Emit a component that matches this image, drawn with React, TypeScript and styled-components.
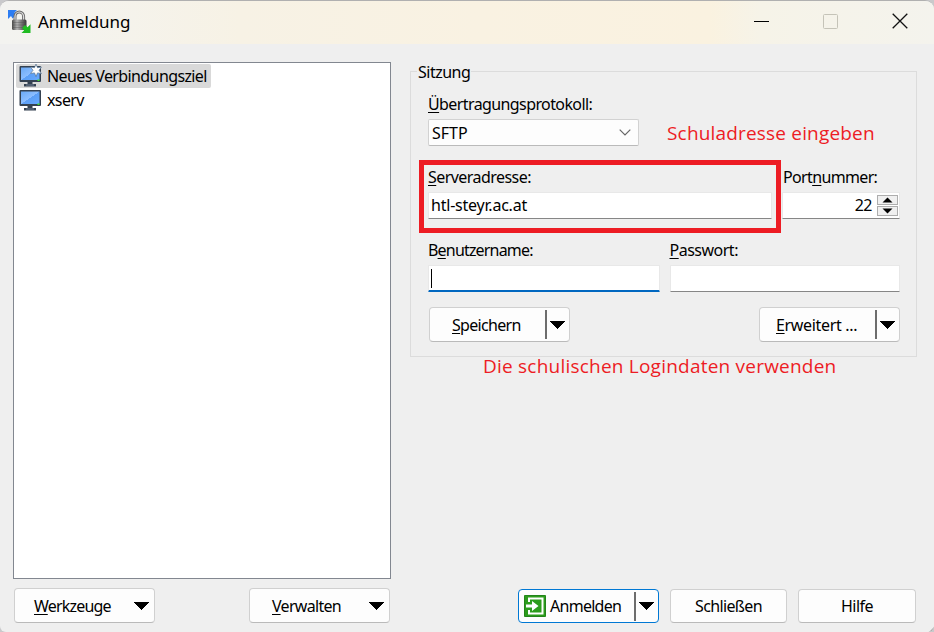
import React from "react";
import styled, { createGlobalStyle } from "styled-components";

const GlobalStyle = createGlobalStyle`
  * { box-sizing: border-box; }
  body { margin: 0; background: #c9c9cb; overflow: hidden; }
`;

const Window = styled.div`
  position: relative;
  width: 934px;
  height: 632px;
  overflow: hidden;
  display: flex;
  flex-direction: column;
  background: #efefef;
  border-top: 1px solid #b0b0b0;
  border-radius: 9px 9px 6px 6px;
  font-family: "Noto Sans", sans-serif;
  font-size: 16px;
  line-height: 22px;
  color: #000;
`;

const TitleBar = styled.header`
  display: flex;
  align-items: center;
  height: 43px;
  flex: none;
  padding: 0 0 1px 8px;
  background: linear-gradient(90deg, #f3f3f0 0, #f4f3ee 80px, #f7f2e5 240px, #f9f2e2 480px, #faf2e0 710px, #f6f3e8 760px, #f4f3ed 934px);
`;

const Text = styled.span<{ $ls?: number; $size?: number }>`
  white-space: pre;
  font-size: ${(p) => p.$size ?? 16}px;
  letter-spacing: ${(p) => p.$ls ?? -0.5}px;
`;

const Key = styled.span`
  text-decoration: underline;
  text-decoration-thickness: 1px;
  text-underline-offset: 2px;
  text-decoration-skip-ink: none;
`;

const Title = styled(Text)`
  margin-left: 7px;
  flex: 1;
`;

const WindowButton = styled.div<{ $w: number }>`
  width: ${(p) => p.$w}px;
  margin-bottom: 2px;
  display: flex;
  justify-content: center;
`;

const Content = styled.main`
  display: flex;
  flex: 1;
  padding: 18px 17px 0 13px;
`;

const LeftColumn = styled.section`
  width: 378px;
  margin-right: 19px;
`;

const SiteList = styled.div`
  height: 517px;
  border: 1px solid #828790;
  background: #fff;
  padding: 1px 2px;
  display: flex;
  flex-direction: column;
  align-items: flex-start;
`;

const Site = styled.div<{ $selected?: boolean }>`
  display: flex;
  align-items: center;
  gap: 5px;
  height: 24px;
  padding: 0 4px 0 3px;
  border-radius: 2px;
  background: ${(p) => (p.$selected ? "#d9d9d9" : "transparent")};
`;

const LeftButtons = styled.div`
  display: flex;
  justify-content: space-between;
  padding: 9px 1px 0;
`;

const Button = styled.button<{ $w: number; $h?: number; $pad?: number; $primary?: boolean }>`
  width: ${(p) => p.$w}px;
  height: ${(p) => p.$h ?? 35}px;
  display: flex;
  align-items: center;
  justify-content: ${(p) => (p.$pad === undefined ? "center" : "flex-start")};
  padding: 0 4px 0 ${(p) => p.$pad ?? 4}px;
  border: 1px solid ${(p) => (p.$primary ? "#0078d4" : "#d0d0d0")};
  border-bottom-color: ${(p) => (p.$primary ? "#0078d4" : "#bababa")};
  border-radius: 4px;
  background: #fdfdfd;
  font: inherit;
  color: #000;
`;

const IconText = styled(Text)`
  margin-left: 4px;
`;

const ArrowSlot = styled.span<{ $split?: boolean; $gap?: number }>`
  margin-left: auto;
  margin-right: ${(p) => p.$gap ?? 0}px;
  height: 29px;
  padding-left: 3px;
  display: flex;
  align-items: center;
  border-left: ${(p) => (p.$split ? "2px solid #6d6d6d" : "none")};
`;

const RightColumn = styled.section`
  width: 507px;
  display: flex;
  flex-direction: column;
  padding-top: 9px;
`;

const Group = styled.div`
  height: 286px;
  border: 1px solid #dcdcdc;
  padding: 0 16px 0 17px;
  display: flex;
  flex-direction: column;
`;

const Legend = styled.div`
  align-self: flex-start;
  height: 22px;
  margin: -11px 0 10px -11px;
  padding: 0 1px;
  background: #efefef;
`;

const Label = styled.label<{ $indent?: number }>`
  display: block;
  height: 22px;
  margin-bottom: 4px;
  padding-left: ${(p) => p.$indent ?? 0}px;
`;

const Combo = styled.div`
  width: 211px;
  height: 27px;
  margin-bottom: 20px;
  padding: 0 7px 0 3px;
  display: flex;
  align-items: center;
  justify-content: space-between;
  border: 1px solid #d2d2d2;
  border-bottom-color: #bababa;
  border-radius: 2px;
  background: #fdfdfd;
`;

const Row = styled.div<{ $mb: number; $gap: number }>`
  display: flex;
  gap: ${(p) => p.$gap}px;
  margin-bottom: ${(p) => p.$mb}px;
`;

const Field = styled.div<{ $w: number }>`
  width: ${(p) => p.$w}px;
`;

const Input = styled.div<{ $focus?: boolean }>`
  height: 27px;
  display: flex;
  align-items: center;
  padding: 0 2px;
  background: #fff;
  border: 1px solid #e8e8e8;
  border-bottom: ${(p) => (p.$focus ? "2px solid #0067c0" : "1px solid #868686")};
  border-radius: 1px;
`;

const Value = styled(Text)`
  padding-bottom: 2px;
`;

const PortInput = styled(Input)`
  justify-content: flex-end;
  gap: 5px;
  padding-right: 1px;
`;

const Caret = styled.i`
  width: 1px;
  height: 19px;
  background: #000;
`;

const Spin = styled.div`
  display: flex;
  flex-direction: column;
  gap: 1px;
`;

const SpinButton = styled.div`
  width: 21px;
  height: 10px;
  display: flex;
  align-items: center;
  justify-content: center;
  border: 1px solid #adadad;
  background: #f0f0f0;
`;

const GroupButtons = styled.div`
  display: flex;
  justify-content: space-between;
  padding-left: 1px;
`;

const DialogButtons = styled.footer`
  display: flex;
  gap: 11px;
  margin-top: 232px;
  padding-left: 108px;
`;

const Highlight = styled.div`
  position: absolute;
  left: 419px;
  top: 159px;
  width: 362px;
  height: 73px;
  border: 5px solid #ed1c24;
`;

const Note = styled.div<{ $x: number; $y: number; $ls: number }>`
  position: absolute;
  left: ${(p) => p.$x}px;
  top: ${(p) => p.$y}px;
  font-family: "Open Sans", sans-serif;
  font-size: 19px;
  line-height: 24px;
  letter-spacing: ${(p) => p.$ls}px;
  white-space: pre;
  color: #ed1c24;
`;

const Grip = styled.svg`
  position: absolute;
  right: 0;
  bottom: 0;
`;

const AppIcon = () => (
  <svg width="23" height="24" viewBox="0 0 23 24">
    <defs>
      <linearGradient id="lock" x1="0" x2="1">
        <stop offset="0" stopColor="#4a4a4a" />
        <stop offset=".35" stopColor="#b4b4b4" />
        <stop offset=".7" stopColor="#6c6c6c" />
        <stop offset="1" stopColor="#383838" />
      </linearGradient>
    </defs>
    <path d="M0 0h9L6.500 2.500 8 5 4.500 8.500 3 6 0 9z" fill="#2d7df2" />
    <path d="M7 11V6.500a4.300 4.500 0 0 1 8.600 0V11" fill="none" stroke="#6a6a6a" strokeWidth="3" />
    <path d="M7 11V6.500a4.300 4.500 0 0 1 8.600 0V11" fill="none" stroke="#dcdcdc" strokeWidth="1.200" />
    <rect x="4" y="9.500" width="14.500" height="10.500" rx="1.500" fill="url(#lock)" />
    <path d="M5 12.500h12M5 15h12M5 17.500h12" stroke="#444" strokeOpacity=".35" />
    <path d="M22.500 23h-9l2.700-2.700-2.200-2.300 3-3 2.500 2.200 3-3z" fill="#1fbb22" />
  </svg>
);

const Monitor = ({ star }: { star?: boolean }) => (
  <svg width="23" height="22" viewBox="0 0 23 22" overflow="visible">
    <defs>
      <linearGradient id="screen" x1="0" y1="0" x2="1" y2="1">
        <stop offset="0" stopColor="#6aa9f5" />
        <stop offset=".5" stopColor="#8cbeff" />
        <stop offset=".51" stopColor="#5c9ff5" />
        <stop offset="1" stopColor="#67a9ff" />
      </linearGradient>
    </defs>
    <path d="M8.500 16h5v3h3.500v2.500H5V19h3.500z" fill="#344150" />
    <path d="M7 20h8" stroke="#718296" />
    <rect x=".5" y="1" width="21.500" height="16" rx="1" fill="#344150" />
    <rect x="2" y="2.500" width="18.500" height="12.500" fill="url(#screen)" />
    <rect x="18.500" y="14.500" width="2" height="1.500" fill="#38e32e" />
    {star && (
      <path
        d="M17 -1l1.500 3.700 4-.6-2.500 3.200 2.500 3.200-4-.6L17 11.600l-1.500-3.700-4 .6L14 5.300l-2.500-3.200 4 .6z"
        fill="#fff"
        stroke="#55718f"
        strokeWidth=".7"
      />
    )}
  </svg>
);

const LoginIcon = () => (
  <svg width="22" height="22" viewBox="0 0 22 22">
    <rect width="22" height="22" rx="1" fill="#2c9c1c" />
    <rect x=".5" y=".5" width="21" height="21" rx="1" fill="none" stroke="#23831a" />
    <path d="M5 7V3.500h13.500v15H5V15" fill="none" stroke="#fff" strokeWidth="2" />
    <path d="M2 9.500h6V6l6.500 5L8 16v-3.500H2z" fill="#fff" />
  </svg>
);

const Arrow = () => (
  <svg width="15" height="8" viewBox="0 0 15 8" shapeRendering="crispEdges">
    <path d="M0 0h15L7.500 8z" />
  </svg>
);

const SpinArrow = ({ up }: { up?: boolean }) => (
  <svg width="11" height="6" viewBox="0 0 11 6">
    <path d={up ? "M.5 5.500h10L5.500.5z" : "M.5.500h10L5.500 5.500z"} />
  </svg>
);

export default function App() {
  return (
    <>
      <GlobalStyle />
      <Window>
        <TitleBar>
          <AppIcon />
          <Title $size={17} $ls={-0.1}>Anmeldung</Title>
          <WindowButton $w={67}>
            <svg width="15" height="15"><path d="M0 7.500h15" stroke="#000" /></svg>
          </WindowButton>
          <WindowButton $w={71}>
            <svg width="15" height="15"><rect x=".5" y=".5" width="14" height="14" rx="1" fill="none" stroke="#c5c3b8" /></svg>
          </WindowButton>
          <WindowButton $w={68}>
            <svg width="16" height="16"><path d="M.7.700l14.600 14.600M15.300.700L.7 15.300" stroke="#111" strokeWidth="1.300" /></svg>
          </WindowButton>
        </TitleBar>
        <Content>
          <LeftColumn>
            <SiteList>
              <Site $selected><Monitor star /><Text $ls={-0.61}>Neues Verbindungsziel</Text></Site>
              <Site><Monitor /><Text $ls={-0.6}>xserv</Text></Site>
            </SiteList>
            <LeftButtons>
              <Button $w={141} $pad={19}><Text $ls={-0.8}><Key>W</Key>erkzeuge</Text><ArrowSlot $gap={1}><Arrow /></ArrowSlot></Button>
              <Button $w={141} $pad={22}><Text $ls={-0.7}><Key>V</Key>erwalten</Text><ArrowSlot $gap={1}><Arrow /></ArrowSlot></Button>
            </LeftButtons>
          </LeftColumn>
          <RightColumn>
            <Group>
              <Legend><Text>Sitzung</Text></Legend>
              <Label><Text $ls={-0.6}><Key>Ü</Key>bertragungsprotokoll:</Text></Label>
              <Combo>
                <Text $ls={0}>SFTP</Text>
                <svg width="12" height="7"><path d="M.7.700L6 6 11.300.700" fill="none" stroke="#666" strokeWidth="1.200" /></svg>
              </Combo>
              <Row $gap={10} $mb={20}>
                <Field $w={344}>
                  <Label><Text $ls={-0.55}><Key>S</Key>erveradresse:</Text></Label>
                  <Input><Value $ls={-0.22}>htl-steyr.ac.at</Value></Input>
                </Field>
                <Field $w={118}>
                  <Label $indent={1}><Text $ls={-0.65}>Port<Key>n</Key>ummer:</Text></Label>
                  <PortInput>
                    <Value>22</Value>
                    <Spin>
                      <SpinButton><SpinArrow up /></SpinButton>
                      <SpinButton><SpinArrow /></SpinButton>
                    </Spin>
                  </PortInput>
                </Field>
              </Row>
              <Row $gap={10} $mb={15}>
                <Field $w={232}>
                  <Label><Text $ls={-0.82}>B<Key>e</Key>nutzername:</Text></Label>
                  <Input $focus><Caret /></Input>
                </Field>
                <Field $w={231}>
                  <Label><Text><Key>P</Key>asswort:</Text></Label>
                  <Input />
                </Field>
              </Row>
              <GroupButtons>
                <Button $w={141} $pad={22}><Text $ls={-0.7}><Key>S</Key>peichern</Text><ArrowSlot $split><Arrow /></ArrowSlot></Button>
                <Button $w={141} $pad={16}><Text $ls={-0.33}><Key>E</Key>rweitert ...</Text><ArrowSlot $split><Arrow /></ArrowSlot></Button>
              </GroupButtons>
            </Group>
            <DialogButtons>
              <Button $w={141} $h={34} $pad={5} $primary><LoginIcon /><IconText $ls={-0.72}>Anmelden</IconText><ArrowSlot $split><Arrow /></ArrowSlot></Button>
              <Button $w={117} $h={34}><Text $ls={-0.65}>Schließen</Text></Button>
              <Button $w={118} $h={34}><Text>Hilfe</Text></Button>
            </DialogButtons>
          </RightColumn>
        </Content>
        <Highlight />
        <Note $x={667} $y={120} $ls={0.18}>Schuladresse eingeben</Note>
        <Note $x={483} $y={353} $ls={0.22}>Die schulischen Logindaten verwenden</Note>
        <Grip width="5" height="5"><path d="M5 0v5H0z" fill="#aaa" /></Grip>
      </Window>
    </>
  );
}
